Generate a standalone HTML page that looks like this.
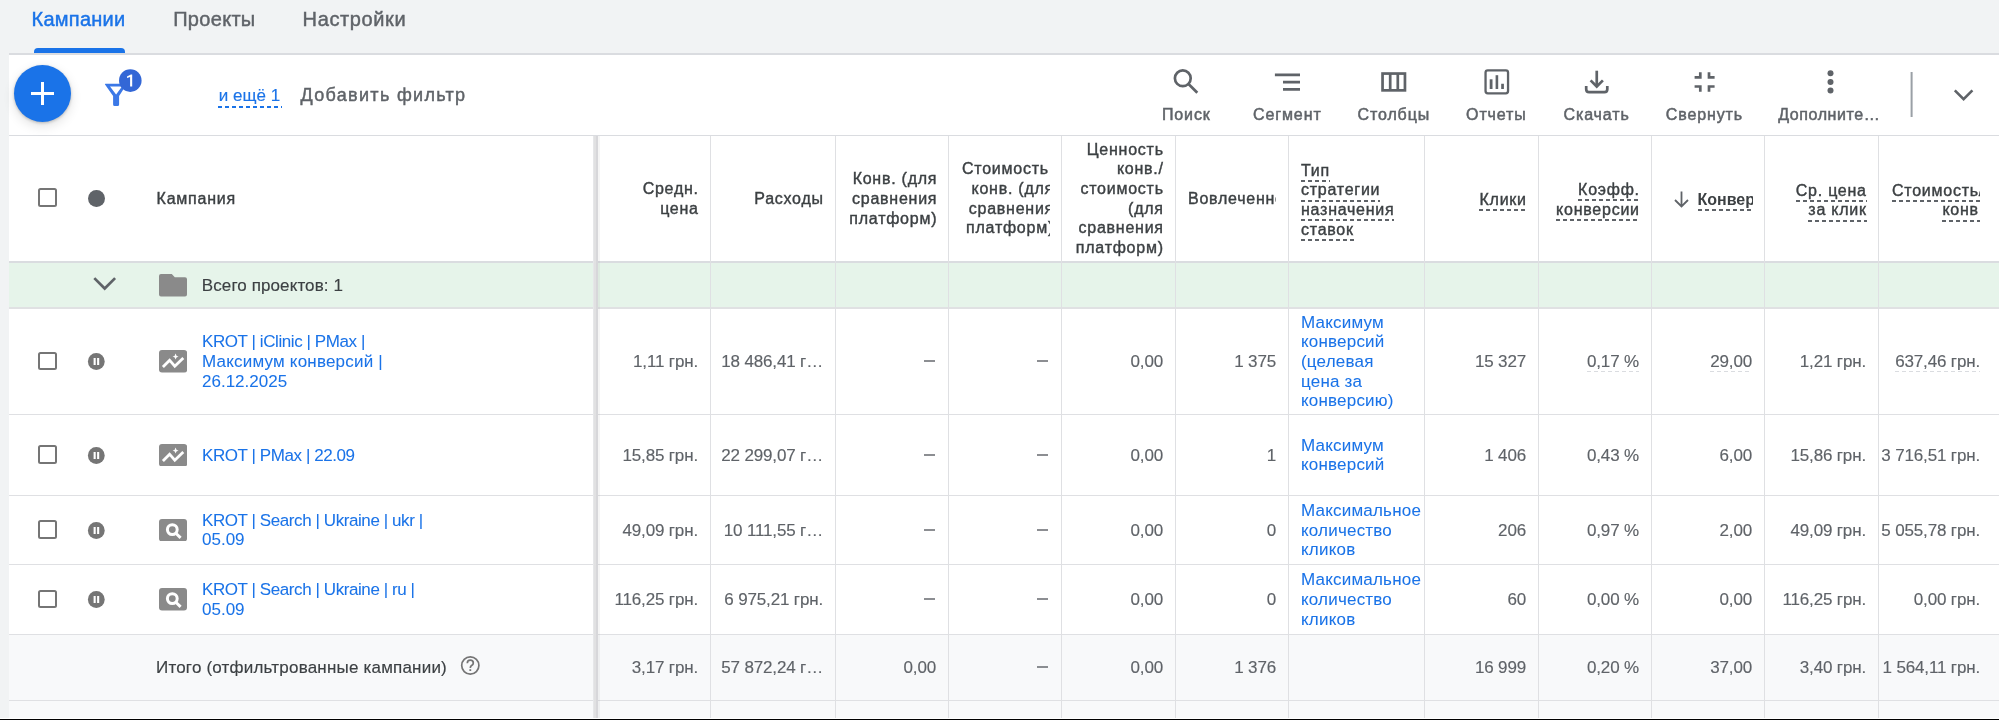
<!DOCTYPE html>
<html><head><meta charset="utf-8">
<style>
html,body{margin:0;padding:0;}
body{width:1999px;height:720px;overflow:hidden;position:relative;background:#f1f3f4;font-family:"Liberation Sans", sans-serif;}
.t{position:absolute;white-space:nowrap;}
#w{position:absolute;left:0;top:0;width:1999px;height:720px;will-change:transform;}
.r{position:absolute;}
.clip{position:absolute;overflow:hidden;}
.ful{padding-bottom:1px;background:repeating-linear-gradient(to right,#dadce0 0 4px,transparent 4px 7px) left bottom/100% 1px no-repeat;}
.ul{padding-bottom:3.3px;background:repeating-linear-gradient(to right,#5f6368 0 4px,transparent 4px 7px) left bottom/100% 2px no-repeat;}
</style></head><body><div id="w">
<div class="r" style="left:9px;top:55px;width:1990px;height:663px;background:#fff;"></div>
<div class="r" style="left:9px;top:53px;width:1990px;height:2px;background:#dadce0;"></div>
<div class="t" style="top:8.97px;font-size:20px;line-height:20px;color:#1a73e8;letter-spacing:0.25px;-webkit-text-stroke:0.45px #1a73e8;left:31.60px;">Кампании</div>
<div class="t" style="top:8.97px;font-size:20px;line-height:20px;color:#5f6368;letter-spacing:0.3px;-webkit-text-stroke:0.45px #5f6368;left:173.20px;">Проекты</div>
<div class="t" style="top:8.97px;font-size:20px;line-height:20px;color:#5f6368;letter-spacing:0.62px;-webkit-text-stroke:0.45px #5f6368;left:302.60px;">Настройки</div>
<div class="r" style="left:34px;top:47.5px;width:91px;height:5.5px;background:#1a73e8;border-radius:4px 4px 0 0;"></div>
<div class="r" style="left:9px;top:135px;width:1990px;height:1px;background:#dadce0;"></div>
<div class="r" style="left:14px;top:65px;width:57px;height:57px;border-radius:50%;background:#1a73e8;box-shadow:0 1px 3px rgba(0,0,0,.22),0 4px 12px rgba(0,0,0,.12);"></div>
<div class="r" style="left:31px;top:92.25px;width:23px;height:2.5px;background:#fff;"></div>
<div class="r" style="left:41.25px;top:82px;width:2.5px;height:23px;background:#fff;"></div>
<svg class="r" style="left:100px;top:66px" width="46" height="44" viewBox="0 0 46 44">
<path fill-rule="evenodd" fill="#3b78e7" d="M5.5 17.75 H27 L19.1 30 V38.5 Q19.1 40 17.6 40 H14.6 Q13.1 40 13.1 38.5 V30 L5 18.6 Q4.6 17.75 5.5 17.75Z M10 20.6 L16.1 28.4 L22 20.6Z"/>
<circle cx="30.3" cy="14.6" r="11.3" fill="#3367d6"/>
<path d="M27 10.4 L30.9 8.4 H32.2 V20.6 H30.1 V10.9 L27 12.1Z" fill="#fff"/>
</svg>
<div class="t" style="top:85.51px;font-size:17px;line-height:20px;color:#1a73e8;-webkit-text-stroke:0.15px #1a73e8;left:218.80px;">и ещё 1</div>
<div class="r" style="left:218px;top:105.5px;width:64px;height:2px;background:repeating-linear-gradient(to right,#1a73e8 0 4.5px,transparent 4.5px 7px);"></div>
<div class="t" style="top:85.16px;font-size:18px;line-height:20px;color:#5f6368;letter-spacing:1.32px;-webkit-text-stroke:0.45px #5f6368;left:300.50px;">Добавить фильтр</div>
<div class="t" style="top:105.16px;font-size:16px;line-height:20px;color:#5f6368;letter-spacing:0.9px;-webkit-text-stroke:0.5px #5f6368;left:1116.30px;width:140px;text-align:center;">Поиск</div>
<div class="t" style="top:105.16px;font-size:16px;line-height:20px;color:#5f6368;letter-spacing:0.9px;-webkit-text-stroke:0.5px #5f6368;left:1217.30px;width:140px;text-align:center;">Сегмент</div>
<div class="t" style="top:105.16px;font-size:16px;line-height:20px;color:#5f6368;letter-spacing:0.9px;-webkit-text-stroke:0.5px #5f6368;left:1323.80px;width:140px;text-align:center;">Столбцы</div>
<div class="t" style="top:105.16px;font-size:16px;line-height:20px;color:#5f6368;letter-spacing:0.9px;-webkit-text-stroke:0.5px #5f6368;left:1426.40px;width:140px;text-align:center;">Отчеты</div>
<div class="t" style="top:105.16px;font-size:16px;line-height:20px;color:#5f6368;letter-spacing:0.9px;-webkit-text-stroke:0.5px #5f6368;left:1526.60px;width:140px;text-align:center;">Скачать</div>
<div class="t" style="top:105.16px;font-size:16px;line-height:20px;color:#5f6368;letter-spacing:0.9px;-webkit-text-stroke:0.5px #5f6368;left:1634.40px;width:140px;text-align:center;">Свернуть</div>
<div class="t" style="top:105.16px;font-size:16px;line-height:20px;color:#5f6368;letter-spacing:0.6px;-webkit-text-stroke:0.5px #5f6368;left:1759.30px;width:140px;text-align:center;">Дополните…</div>
<svg class="r" style="left:0;top:0" width="1999" height="140" viewBox="0 0 1999 140">
<g fill="none" stroke="#5f6368" stroke-width="2.7">
<circle cx="1182.8" cy="78.3" r="7.9"/>
<path d="M1188.5 84 L1197.3 92.8"/>
<path d="M1274.9 74.9 H1300 M1283 82.2 H1300 M1283 89.4 H1300"/>
<rect x="1382.55" y="73.55" width="22.4" height="16.8"/>
<path d="M1390.2 73.5 V90.4 M1397.8 73.5 V90.4"/>
<rect x="1485.55" y="70.4" width="22.5" height="22.9" rx="2.2" stroke-width="2.3"/>
<path d="M1596.75 70.7 V86"/>
<path d="M1590.6 80.4 L1596.75 86.5 L1602.9 80.4"/>
<path d="M1586.2 86 V89.2 Q1586.2 92.1 1589.1 92.1 H1604.4 Q1607.3 92.1 1607.3 89.2 V86"/>
<path d="M1700.3 72.2 V77.4 H1694.6 M1709 72.2 V77.4 H1714.6 M1694.6 86.5 H1700.3 V91.7 M1714.6 86.5 H1709 V91.7"/>
<path d="M1954.8 90.3 L1963.6 99.1 L1972.4 90.3" stroke-width="2.6"/>
</g>
<g fill="#5f6368">
<rect x="1489.7" y="79.3" width="2.8" height="9.7"/>
<rect x="1495.6" y="75.2" width="2.6" height="13.8"/>
<rect x="1501.2" y="83.75" width="2.7" height="5.25"/>
<circle cx="1830.5" cy="73.3" r="3"/>
<circle cx="1830.5" cy="82" r="3"/>
<circle cx="1830.5" cy="90.6" r="3"/>
</g>
<rect x="1910.6" y="72" width="2" height="45" fill="#9aa0a6"/>
</svg>
<div class="r" style="left:9px;top:263px;width:1990px;height:44px;background:#e6f4ea;"></div>
<div class="r" style="left:9px;top:635px;width:1990px;height:83px;background:#f8f9fa;"></div>
<div class="r" style="left:9px;top:261px;width:1990px;height:2px;background:#dadce0;"></div>
<div class="r" style="left:9px;top:307px;width:1990px;height:2px;background:#e0e1e3;"></div>
<div class="r" style="left:9px;top:414px;width:1990px;height:1px;background:#dfe0e3;"></div>
<div class="r" style="left:9px;top:495px;width:1990px;height:1px;background:#dfe0e3;"></div>
<div class="r" style="left:9px;top:564px;width:1990px;height:1px;background:#dfe0e3;"></div>
<div class="r" style="left:9px;top:634px;width:1990px;height:1px;background:#dfe0e3;"></div>
<div class="r" style="left:9px;top:700px;width:1990px;height:1px;background:#dfe0e3;"></div>
<div class="r" style="left:710px;top:136px;width:1px;height:582px;background:#dfe0e3;"></div>
<div class="r" style="left:835px;top:136px;width:1px;height:582px;background:#dfe0e3;"></div>
<div class="r" style="left:948px;top:136px;width:1px;height:582px;background:#dfe0e3;"></div>
<div class="r" style="left:1061px;top:136px;width:1px;height:582px;background:#dfe0e3;"></div>
<div class="r" style="left:1175px;top:136px;width:1px;height:582px;background:#dfe0e3;"></div>
<div class="r" style="left:1288px;top:136px;width:1px;height:582px;background:#dfe0e3;"></div>
<div class="r" style="left:1424px;top:136px;width:1px;height:582px;background:#dfe0e3;"></div>
<div class="r" style="left:1538px;top:136px;width:1px;height:582px;background:#dfe0e3;"></div>
<div class="r" style="left:1651px;top:136px;width:1px;height:582px;background:#dfe0e3;"></div>
<div class="r" style="left:1764px;top:136px;width:1px;height:582px;background:#dfe0e3;"></div>
<div class="r" style="left:1878px;top:136px;width:1px;height:582px;background:#dfe0e3;"></div>
<div class="r" style="left:593px;top:136px;width:1px;height:582px;background:#e6e7e9;"></div>
<div class="r" style="left:594px;top:136px;width:2px;height:582px;background:#e1e1e2;"></div>
<div class="r" style="left:596px;top:136px;width:2px;height:582px;background:#d7d7da;"></div>
<div class="r" style="left:598px;top:136px;width:2px;height:582px;background:rgba(0,0,0,0.04);"></div>
<div class="r" style="left:0px;top:718px;width:1999px;height:1px;background:#fff;"></div>
<div class="r" style="left:0px;top:719px;width:1999px;height:1px;background:#000;"></div>
<div class="r" style="left:38.2px;top:188.3px;width:14.6px;height:14.6px;border:2.6px solid #757575;border-radius:2.5px;"></div>
<div class="r" style="left:87.8px;top:189.8px;width:16.8px;height:16.8px;border-radius:50%;background:#5f6368;"></div>
<div class="t" style="top:189.21px;font-size:16px;line-height:19.7px;color:#3c4043;letter-spacing:0.75px;-webkit-text-stroke:0.4px #3c4043;left:156.60px;">Кампания</div>
<div class="t" style="top:179.41px;font-size:16px;line-height:19.7px;color:#3c4043;letter-spacing:0.75px;-webkit-text-stroke:0.4px #3c4043;left:298.75px;width:400px;text-align:right;">Средн.</div>
<div class="t" style="top:199.11px;font-size:16px;line-height:19.7px;color:#3c4043;letter-spacing:0.75px;-webkit-text-stroke:0.4px #3c4043;left:298.75px;width:400px;text-align:right;">цена</div>
<div class="t" style="top:189.01px;font-size:16px;line-height:19.7px;color:#3c4043;letter-spacing:0.75px;-webkit-text-stroke:0.4px #3c4043;left:423.75px;width:400px;text-align:right;">Расходы</div>
<div class="t" style="top:169.31px;font-size:16px;line-height:19.7px;color:#3c4043;letter-spacing:0.75px;-webkit-text-stroke:0.4px #3c4043;left:537.25px;width:400px;text-align:right;">Конв. (для</div>
<div class="t" style="top:189.01px;font-size:16px;line-height:19.7px;color:#3c4043;letter-spacing:0.75px;-webkit-text-stroke:0.4px #3c4043;left:537.25px;width:400px;text-align:right;">сравнения</div>
<div class="t" style="top:208.71px;font-size:16px;line-height:19.7px;color:#3c4043;letter-spacing:0.75px;-webkit-text-stroke:0.4px #3c4043;left:537.25px;width:400px;text-align:right;">платформ)</div>
<div class="clip" style="left:949px;width:101px;top:159.21px;height:23.7px;"><div style="position:absolute;left:-295.00px;width:400px;text-align:right;top:0;font-size:16px;line-height:19.7px;color:#3c4043;letter-spacing:0.75px;white-space:nowrap;-webkit-text-stroke:0.4px #3c4043;">Стоимость,</div></div>
<div class="clip" style="left:949px;width:101px;top:178.91px;height:23.7px;"><div style="position:absolute;left:-295.00px;width:400px;text-align:right;top:0;font-size:16px;line-height:19.7px;color:#3c4043;letter-spacing:0.75px;white-space:nowrap;-webkit-text-stroke:0.4px #3c4043;">конв. (для</div></div>
<div class="clip" style="left:949px;width:101px;top:198.61px;height:23.7px;"><div style="position:absolute;left:-295.00px;width:400px;text-align:right;top:0;font-size:16px;line-height:19.7px;color:#3c4043;letter-spacing:0.75px;white-space:nowrap;-webkit-text-stroke:0.4px #3c4043;">сравнения</div></div>
<div class="clip" style="left:949px;width:101px;top:218.31px;height:23.7px;"><div style="position:absolute;left:-295.00px;width:400px;text-align:right;top:0;font-size:16px;line-height:19.7px;color:#3c4043;letter-spacing:0.75px;white-space:nowrap;-webkit-text-stroke:0.4px #3c4043;">платформ)</div></div>
<div class="t" style="top:139.61px;font-size:16px;line-height:19.7px;color:#3c4043;letter-spacing:0.75px;-webkit-text-stroke:0.4px #3c4043;left:763.75px;width:400px;text-align:right;">Ценность</div>
<div class="t" style="top:159.31px;font-size:16px;line-height:19.7px;color:#3c4043;letter-spacing:0.75px;-webkit-text-stroke:0.4px #3c4043;left:763.75px;width:400px;text-align:right;">конв./</div>
<div class="t" style="top:179.01px;font-size:16px;line-height:19.7px;color:#3c4043;letter-spacing:0.75px;-webkit-text-stroke:0.4px #3c4043;left:763.75px;width:400px;text-align:right;">стоимость</div>
<div class="t" style="top:198.71px;font-size:16px;line-height:19.7px;color:#3c4043;letter-spacing:0.75px;-webkit-text-stroke:0.4px #3c4043;left:763.75px;width:400px;text-align:right;">(для</div>
<div class="t" style="top:218.41px;font-size:16px;line-height:19.7px;color:#3c4043;letter-spacing:0.75px;-webkit-text-stroke:0.4px #3c4043;left:763.75px;width:400px;text-align:right;">сравнения</div>
<div class="t" style="top:238.11px;font-size:16px;line-height:19.7px;color:#3c4043;letter-spacing:0.75px;-webkit-text-stroke:0.4px #3c4043;left:763.75px;width:400px;text-align:right;">платформ)</div>
<div class="clip" style="left:1176px;width:100px;top:188.61px;height:23.7px;"><div style="position:absolute;left:12.00px;top:0;font-size:16px;line-height:19.7px;color:#3c4043;letter-spacing:0.75px;white-space:nowrap;-webkit-text-stroke:0.4px #3c4043;">Вовлеченность</div></div>
<div class="t" style="top:160.51px;font-size:16px;line-height:19.7px;color:#3c4043;letter-spacing:0.75px;-webkit-text-stroke:0.4px #3c4043;left:1301.00px;"><span class="ul">Тип</span></div>
<div class="t" style="top:180.21px;font-size:16px;line-height:19.7px;color:#3c4043;letter-spacing:0.75px;-webkit-text-stroke:0.4px #3c4043;left:1301.00px;"><span class="ul">стратегии</span></div>
<div class="t" style="top:199.91px;font-size:16px;line-height:19.7px;color:#3c4043;letter-spacing:0.75px;-webkit-text-stroke:0.4px #3c4043;left:1301.00px;"><span class="ul">назначения</span></div>
<div class="t" style="top:219.61px;font-size:16px;line-height:19.7px;color:#3c4043;letter-spacing:0.75px;-webkit-text-stroke:0.4px #3c4043;left:1301.00px;"><span class="ul">ставок</span></div>
<div class="t" style="top:190.11px;font-size:16px;line-height:19.7px;color:#3c4043;letter-spacing:0.75px;-webkit-text-stroke:0.4px #3c4043;left:1126.75px;width:400px;text-align:right;"><span class="ul">Клики</span></div>
<div class="t" style="top:179.91px;font-size:16px;line-height:19.7px;color:#3c4043;letter-spacing:0.75px;-webkit-text-stroke:0.4px #3c4043;left:1239.75px;width:400px;text-align:right;"><span class="ul">Коэфф.</span></div>
<div class="t" style="top:199.61px;font-size:16px;line-height:19.7px;color:#3c4043;letter-spacing:0.75px;-webkit-text-stroke:0.4px #3c4043;left:1239.75px;width:400px;text-align:right;"><span class="ul">конверсии</span></div>
<div class="clip" style="left:1652px;width:101px;top:189.71px;height:23.7px;"><div style="position:absolute;left:45.50px;top:0;font-size:16px;line-height:19.7px;color:#3c4043;letter-spacing:0px;white-space:nowrap;font-weight:700;"><span class="ul">Конверсии</span></div></div>
<svg class="r" style="left:1670px;top:188px" width="24" height="22" viewBox="0 0 24 22"><path d="M11.5 3.5 V18 M5 12 L11.5 18.5 L18 12" fill="none" stroke="#5f6368" stroke-width="1.8"/></svg>
<div class="t" style="top:180.51px;font-size:16px;line-height:19.7px;color:#3c4043;letter-spacing:0.75px;-webkit-text-stroke:0.4px #3c4043;left:1466.75px;width:400px;text-align:right;"><span class="ul">Ср. цена</span></div>
<div class="t" style="top:200.21px;font-size:16px;line-height:19.7px;color:#3c4043;letter-spacing:0.75px;-webkit-text-stroke:0.4px #3c4043;left:1466.75px;width:400px;text-align:right;"><span class="ul">за клик</span></div>
<div class="clip" style="left:1879px;width:101px;top:180.51px;height:23.7px;"><div style="position:absolute;left:-295.00px;width:400px;text-align:right;top:0;font-size:16px;line-height:19.7px;color:#3c4043;letter-spacing:0.75px;white-space:nowrap;-webkit-text-stroke:0.4px #3c4043;"><span class="ul">Стоимость/</span></div></div>
<div class="clip" style="left:1879px;width:101px;top:200.21px;height:23.7px;"><div style="position:absolute;left:-295.00px;width:400px;text-align:right;top:0;font-size:16px;line-height:19.7px;color:#3c4043;letter-spacing:0.75px;white-space:nowrap;-webkit-text-stroke:0.4px #3c4043;"><span class="ul">конв.</span></div></div>
<svg class="r" style="left:92px;top:275px" width="26" height="18" viewBox="0 0 26 18"><path d="M2.3 3.1 L12.7 13.5 L23.1 3.1" fill="none" stroke="#5f6368" stroke-width="2.7"/></svg>
<svg class="r" style="left:158.9px;top:274.1px" width="28" height="22.5" viewBox="0 0 28 22.5"><path d="M0 2 Q0 0 2 0 H12.8 L15.8 3.2 H26 Q28 3.2 28 5.2 V20.5 Q28 22.5 26 22.5 H2 Q0 22.5 0 20.5Z" fill="#8a8a8a"/></svg>
<div class="t" style="top:275.76px;font-size:17px;line-height:19.7px;color:#3c4043;-webkit-text-stroke:0.15px #3c4043;letter-spacing:0.1px;left:201.80px;">Всего проектов: 1</div>
<div class="r" style="left:38.3px;top:351.70px;width:14.6px;height:14.6px;border:2.6px solid #757575;border-radius:2.5px;"></div>
<svg class="r" style="left:87px;top:352.00px" width="19" height="19" viewBox="0 0 19 19"><circle cx="9.3" cy="9.5" r="8.4" fill="#757575"/><rect x="6.6" y="6" width="2.1" height="7" fill="#fff"/><rect x="10.1" y="6" width="2.1" height="7" fill="#fff"/></svg>
<svg class="r" style="left:158.8px;top:350.10px" width="28.2" height="22.6" viewBox="0 0 28.2 22.6"><rect width="28.2" height="22.6" rx="3" fill="#8a8a8a"/><path d="M3.9 17 L10.6 10.2 L15.8 16.2 L24.3 8.1" fill="none" stroke="#fff" stroke-width="2.8"/><path d="M16.6 3.6 Q16.9 6.3 19.6 6.6 Q16.9 6.9 16.6 9.6 Q16.3 6.9 13.6 6.6 Q16.3 6.3 16.6 3.6Z" fill="#fff"/></svg>
<div class="t" style="top:332.36px;font-size:17px;line-height:19.7px;color:#1a73e8;-webkit-text-stroke:0.05px #1a73e8;left:202.00px;"><span style="letter-spacing:-0.42px">KROT | iClinic | PMax |</span></div>
<div class="t" style="top:352.06px;font-size:17px;line-height:19.7px;color:#1a73e8;-webkit-text-stroke:0.05px #1a73e8;left:202.00px;"><span style="letter-spacing:0.2px">Максимум конверсий |</span></div>
<div class="t" style="top:371.76px;font-size:17px;line-height:19.7px;color:#1a73e8;-webkit-text-stroke:0.05px #1a73e8;left:202.00px;">26.12.2025</div>
<div class="t" style="top:352.06px;font-size:17px;line-height:19.7px;color:#5f6368;-webkit-text-stroke:0.15px #5f6368;letter-spacing:-0.15px;left:198.00px;width:500px;text-align:right;">1,11 грн.</div>
<div class="t" style="top:352.06px;font-size:17px;line-height:19.7px;color:#5f6368;-webkit-text-stroke:0.15px #5f6368;letter-spacing:-0.15px;left:323.00px;width:500px;text-align:right;">18 486,41 г…</div>
<div class="r" style="left:924px;top:360px;width:11px;height:2px;background:rgba(95,99,104,0.72);"></div>
<div class="r" style="left:1037px;top:360px;width:11px;height:2px;background:rgba(95,99,104,0.72);"></div>
<div class="t" style="top:352.06px;font-size:17px;line-height:19.7px;color:#5f6368;-webkit-text-stroke:0.15px #5f6368;letter-spacing:-0.15px;left:663.00px;width:500px;text-align:right;">0,00</div>
<div class="t" style="top:352.06px;font-size:17px;line-height:19.7px;color:#5f6368;-webkit-text-stroke:0.15px #5f6368;letter-spacing:-0.15px;left:776.00px;width:500px;text-align:right;">1 375</div>
<div class="t" style="top:312.66px;font-size:17px;line-height:19.7px;color:#1a73e8;-webkit-text-stroke:0.05px #1a73e8;letter-spacing:0.2px;left:1301.00px;">Максимум</div>
<div class="t" style="top:332.36px;font-size:17px;line-height:19.7px;color:#1a73e8;-webkit-text-stroke:0.05px #1a73e8;letter-spacing:0.2px;left:1301.00px;">конверсий</div>
<div class="t" style="top:352.06px;font-size:17px;line-height:19.7px;color:#1a73e8;-webkit-text-stroke:0.05px #1a73e8;letter-spacing:0.2px;left:1301.00px;">(целевая</div>
<div class="t" style="top:371.76px;font-size:17px;line-height:19.7px;color:#1a73e8;-webkit-text-stroke:0.05px #1a73e8;letter-spacing:0.2px;left:1301.00px;">цена за</div>
<div class="t" style="top:391.46px;font-size:17px;line-height:19.7px;color:#1a73e8;-webkit-text-stroke:0.05px #1a73e8;letter-spacing:0.2px;left:1301.00px;">конверсию)</div>
<div class="t" style="top:352.06px;font-size:17px;line-height:19.7px;color:#5f6368;-webkit-text-stroke:0.15px #5f6368;letter-spacing:-0.15px;left:1026.00px;width:500px;text-align:right;">15 327</div>
<div class="t" style="top:352.06px;font-size:17px;line-height:19.7px;color:#5f6368;-webkit-text-stroke:0.15px #5f6368;letter-spacing:-0.15px;left:1139.00px;width:500px;text-align:right;"><span class="ful">0,17 %</span></div>
<div class="t" style="top:352.06px;font-size:17px;line-height:19.7px;color:#5f6368;-webkit-text-stroke:0.15px #5f6368;letter-spacing:-0.15px;left:1252.00px;width:500px;text-align:right;"><span class="ful">29,00</span></div>
<div class="t" style="top:352.06px;font-size:17px;line-height:19.7px;color:#5f6368;-webkit-text-stroke:0.15px #5f6368;letter-spacing:-0.15px;left:1366.00px;width:500px;text-align:right;">1,21 грн.</div>
<div class="t" style="top:352.06px;font-size:17px;line-height:19.7px;color:#5f6368;-webkit-text-stroke:0.15px #5f6368;letter-spacing:-0.15px;left:1480.00px;width:500px;text-align:right;"><span class="ful">637,46 грн.</span></div>
<div class="r" style="left:38.3px;top:445.20px;width:14.6px;height:14.6px;border:2.6px solid #757575;border-radius:2.5px;"></div>
<svg class="r" style="left:87px;top:445.50px" width="19" height="19" viewBox="0 0 19 19"><circle cx="9.3" cy="9.5" r="8.4" fill="#757575"/><rect x="6.6" y="6" width="2.1" height="7" fill="#fff"/><rect x="10.1" y="6" width="2.1" height="7" fill="#fff"/></svg>
<svg class="r" style="left:158.8px;top:443.60px" width="28.2" height="22.6" viewBox="0 0 28.2 22.6"><rect width="28.2" height="22.6" rx="3" fill="#8a8a8a"/><path d="M3.9 17 L10.6 10.2 L15.8 16.2 L24.3 8.1" fill="none" stroke="#fff" stroke-width="2.8"/><path d="M16.6 3.6 Q16.9 6.3 19.6 6.6 Q16.9 6.9 16.6 9.6 Q16.3 6.9 13.6 6.6 Q16.3 6.3 16.6 3.6Z" fill="#fff"/></svg>
<div class="t" style="top:445.56px;font-size:17px;line-height:19.7px;color:#1a73e8;-webkit-text-stroke:0.05px #1a73e8;left:202.00px;"><span style="letter-spacing:-0.42px">KROT | PMax | 22.09</span></div>
<div class="t" style="top:445.56px;font-size:17px;line-height:19.7px;color:#5f6368;-webkit-text-stroke:0.15px #5f6368;letter-spacing:-0.15px;left:198.00px;width:500px;text-align:right;">15,85 грн.</div>
<div class="t" style="top:445.56px;font-size:17px;line-height:19.7px;color:#5f6368;-webkit-text-stroke:0.15px #5f6368;letter-spacing:-0.15px;left:323.00px;width:500px;text-align:right;">22 299,07 г…</div>
<div class="r" style="left:924px;top:454px;width:11px;height:2px;background:rgba(95,99,104,0.72);"></div>
<div class="r" style="left:1037px;top:454px;width:11px;height:2px;background:rgba(95,99,104,0.72);"></div>
<div class="t" style="top:445.56px;font-size:17px;line-height:19.7px;color:#5f6368;-webkit-text-stroke:0.15px #5f6368;letter-spacing:-0.15px;left:663.00px;width:500px;text-align:right;">0,00</div>
<div class="t" style="top:445.56px;font-size:17px;line-height:19.7px;color:#5f6368;-webkit-text-stroke:0.15px #5f6368;letter-spacing:-0.15px;left:776.00px;width:500px;text-align:right;">1</div>
<div class="t" style="top:435.71px;font-size:17px;line-height:19.7px;color:#1a73e8;-webkit-text-stroke:0.05px #1a73e8;letter-spacing:0.2px;left:1301.00px;">Максимум</div>
<div class="t" style="top:455.41px;font-size:17px;line-height:19.7px;color:#1a73e8;-webkit-text-stroke:0.05px #1a73e8;letter-spacing:0.2px;left:1301.00px;">конверсий</div>
<div class="t" style="top:445.56px;font-size:17px;line-height:19.7px;color:#5f6368;-webkit-text-stroke:0.15px #5f6368;letter-spacing:-0.15px;left:1026.00px;width:500px;text-align:right;">1 406</div>
<div class="t" style="top:445.56px;font-size:17px;line-height:19.7px;color:#5f6368;-webkit-text-stroke:0.15px #5f6368;letter-spacing:-0.15px;left:1139.00px;width:500px;text-align:right;">0,43 %</div>
<div class="t" style="top:445.56px;font-size:17px;line-height:19.7px;color:#5f6368;-webkit-text-stroke:0.15px #5f6368;letter-spacing:-0.15px;left:1252.00px;width:500px;text-align:right;">6,00</div>
<div class="t" style="top:445.56px;font-size:17px;line-height:19.7px;color:#5f6368;-webkit-text-stroke:0.15px #5f6368;letter-spacing:-0.15px;left:1366.00px;width:500px;text-align:right;">15,86 грн.</div>
<div class="t" style="top:445.56px;font-size:17px;line-height:19.7px;color:#5f6368;-webkit-text-stroke:0.15px #5f6368;letter-spacing:-0.15px;left:1480.00px;width:500px;text-align:right;">3 716,51 грн.</div>
<div class="r" style="left:38.3px;top:520.20px;width:14.6px;height:14.6px;border:2.6px solid #757575;border-radius:2.5px;"></div>
<svg class="r" style="left:87px;top:520.50px" width="19" height="19" viewBox="0 0 19 19"><circle cx="9.3" cy="9.5" r="8.4" fill="#757575"/><rect x="6.6" y="6" width="2.1" height="7" fill="#fff"/><rect x="10.1" y="6" width="2.1" height="7" fill="#fff"/></svg>
<svg class="r" style="left:158.9px;top:518.75px" width="28" height="22.5" viewBox="0 0 28 22.5"><rect width="28" height="22.5" rx="3" fill="#8a8a8a"/><circle cx="13.3" cy="10.6" r="4.9" fill="none" stroke="#fff" stroke-width="3"/><path d="M16.6 14 L21.6 18.9" stroke="#fff" stroke-width="3"/></svg>
<div class="t" style="top:510.71px;font-size:17px;line-height:19.7px;color:#1a73e8;-webkit-text-stroke:0.05px #1a73e8;left:202.00px;"><span style="letter-spacing:-0.42px">KROT | Search | Ukraine | ukr |</span></div>
<div class="t" style="top:530.41px;font-size:17px;line-height:19.7px;color:#1a73e8;-webkit-text-stroke:0.05px #1a73e8;left:202.00px;">05.09</div>
<div class="t" style="top:520.56px;font-size:17px;line-height:19.7px;color:#5f6368;-webkit-text-stroke:0.15px #5f6368;letter-spacing:-0.15px;left:198.00px;width:500px;text-align:right;">49,09 грн.</div>
<div class="t" style="top:520.56px;font-size:17px;line-height:19.7px;color:#5f6368;-webkit-text-stroke:0.15px #5f6368;letter-spacing:-0.15px;left:323.00px;width:500px;text-align:right;">10 111,55 г…</div>
<div class="r" style="left:924px;top:529px;width:11px;height:2px;background:rgba(95,99,104,0.72);"></div>
<div class="r" style="left:1037px;top:529px;width:11px;height:2px;background:rgba(95,99,104,0.72);"></div>
<div class="t" style="top:520.56px;font-size:17px;line-height:19.7px;color:#5f6368;-webkit-text-stroke:0.15px #5f6368;letter-spacing:-0.15px;left:663.00px;width:500px;text-align:right;">0,00</div>
<div class="t" style="top:520.56px;font-size:17px;line-height:19.7px;color:#5f6368;-webkit-text-stroke:0.15px #5f6368;letter-spacing:-0.15px;left:776.00px;width:500px;text-align:right;">0</div>
<div class="t" style="top:500.86px;font-size:17px;line-height:19.7px;color:#1a73e8;-webkit-text-stroke:0.05px #1a73e8;letter-spacing:0.2px;left:1301.00px;">Максимальное</div>
<div class="t" style="top:520.56px;font-size:17px;line-height:19.7px;color:#1a73e8;-webkit-text-stroke:0.05px #1a73e8;letter-spacing:0.2px;left:1301.00px;">количество</div>
<div class="t" style="top:540.26px;font-size:17px;line-height:19.7px;color:#1a73e8;-webkit-text-stroke:0.05px #1a73e8;letter-spacing:0.2px;left:1301.00px;">кликов</div>
<div class="t" style="top:520.56px;font-size:17px;line-height:19.7px;color:#5f6368;-webkit-text-stroke:0.15px #5f6368;letter-spacing:-0.15px;left:1026.00px;width:500px;text-align:right;">206</div>
<div class="t" style="top:520.56px;font-size:17px;line-height:19.7px;color:#5f6368;-webkit-text-stroke:0.15px #5f6368;letter-spacing:-0.15px;left:1139.00px;width:500px;text-align:right;">0,97 %</div>
<div class="t" style="top:520.56px;font-size:17px;line-height:19.7px;color:#5f6368;-webkit-text-stroke:0.15px #5f6368;letter-spacing:-0.15px;left:1252.00px;width:500px;text-align:right;">2,00</div>
<div class="t" style="top:520.56px;font-size:17px;line-height:19.7px;color:#5f6368;-webkit-text-stroke:0.15px #5f6368;letter-spacing:-0.15px;left:1366.00px;width:500px;text-align:right;">49,09 грн.</div>
<div class="t" style="top:520.56px;font-size:17px;line-height:19.7px;color:#5f6368;-webkit-text-stroke:0.15px #5f6368;letter-spacing:-0.15px;left:1480.00px;width:500px;text-align:right;">5 055,78 грн.</div>
<div class="r" style="left:38.3px;top:589.70px;width:14.6px;height:14.6px;border:2.6px solid #757575;border-radius:2.5px;"></div>
<svg class="r" style="left:87px;top:590.00px" width="19" height="19" viewBox="0 0 19 19"><circle cx="9.3" cy="9.5" r="8.4" fill="#757575"/><rect x="6.6" y="6" width="2.1" height="7" fill="#fff"/><rect x="10.1" y="6" width="2.1" height="7" fill="#fff"/></svg>
<svg class="r" style="left:158.9px;top:588.25px" width="28" height="22.5" viewBox="0 0 28 22.5"><rect width="28" height="22.5" rx="3" fill="#8a8a8a"/><circle cx="13.3" cy="10.6" r="4.9" fill="none" stroke="#fff" stroke-width="3"/><path d="M16.6 14 L21.6 18.9" stroke="#fff" stroke-width="3"/></svg>
<div class="t" style="top:580.21px;font-size:17px;line-height:19.7px;color:#1a73e8;-webkit-text-stroke:0.05px #1a73e8;left:202.00px;"><span style="letter-spacing:-0.42px">KROT | Search | Ukraine | ru |</span></div>
<div class="t" style="top:599.91px;font-size:17px;line-height:19.7px;color:#1a73e8;-webkit-text-stroke:0.05px #1a73e8;left:202.00px;">05.09</div>
<div class="t" style="top:590.06px;font-size:17px;line-height:19.7px;color:#5f6368;-webkit-text-stroke:0.15px #5f6368;letter-spacing:-0.15px;left:198.00px;width:500px;text-align:right;">116,25 грн.</div>
<div class="t" style="top:590.06px;font-size:17px;line-height:19.7px;color:#5f6368;-webkit-text-stroke:0.15px #5f6368;letter-spacing:-0.15px;left:323.00px;width:500px;text-align:right;">6 975,21 грн.</div>
<div class="r" style="left:924px;top:598px;width:11px;height:2px;background:rgba(95,99,104,0.72);"></div>
<div class="r" style="left:1037px;top:598px;width:11px;height:2px;background:rgba(95,99,104,0.72);"></div>
<div class="t" style="top:590.06px;font-size:17px;line-height:19.7px;color:#5f6368;-webkit-text-stroke:0.15px #5f6368;letter-spacing:-0.15px;left:663.00px;width:500px;text-align:right;">0,00</div>
<div class="t" style="top:590.06px;font-size:17px;line-height:19.7px;color:#5f6368;-webkit-text-stroke:0.15px #5f6368;letter-spacing:-0.15px;left:776.00px;width:500px;text-align:right;">0</div>
<div class="t" style="top:570.36px;font-size:17px;line-height:19.7px;color:#1a73e8;-webkit-text-stroke:0.05px #1a73e8;letter-spacing:0.2px;left:1301.00px;">Максимальное</div>
<div class="t" style="top:590.06px;font-size:17px;line-height:19.7px;color:#1a73e8;-webkit-text-stroke:0.05px #1a73e8;letter-spacing:0.2px;left:1301.00px;">количество</div>
<div class="t" style="top:609.76px;font-size:17px;line-height:19.7px;color:#1a73e8;-webkit-text-stroke:0.05px #1a73e8;letter-spacing:0.2px;left:1301.00px;">кликов</div>
<div class="t" style="top:590.06px;font-size:17px;line-height:19.7px;color:#5f6368;-webkit-text-stroke:0.15px #5f6368;letter-spacing:-0.15px;left:1026.00px;width:500px;text-align:right;">60</div>
<div class="t" style="top:590.06px;font-size:17px;line-height:19.7px;color:#5f6368;-webkit-text-stroke:0.15px #5f6368;letter-spacing:-0.15px;left:1139.00px;width:500px;text-align:right;">0,00 %</div>
<div class="t" style="top:590.06px;font-size:17px;line-height:19.7px;color:#5f6368;-webkit-text-stroke:0.15px #5f6368;letter-spacing:-0.15px;left:1252.00px;width:500px;text-align:right;">0,00</div>
<div class="t" style="top:590.06px;font-size:17px;line-height:19.7px;color:#5f6368;-webkit-text-stroke:0.15px #5f6368;letter-spacing:-0.15px;left:1366.00px;width:500px;text-align:right;">116,25 грн.</div>
<div class="t" style="top:590.06px;font-size:17px;line-height:19.7px;color:#5f6368;-webkit-text-stroke:0.15px #5f6368;letter-spacing:-0.15px;left:1480.00px;width:500px;text-align:right;">0,00 грн.</div>
<div class="t" style="top:657.56px;font-size:17px;line-height:19.7px;color:#3c4043;-webkit-text-stroke:0.15px #3c4043;letter-spacing:0.2px;left:156.00px;">Итого (отфильтрованные кампании)</div>
<svg class="r" style="left:460px;top:654.5px" width="21" height="21" viewBox="0 0 21 21"><circle cx="10.3" cy="10.5" r="8.6" fill="none" stroke="#757575" stroke-width="1.7"/><path d="M7.3 8.3 Q7.3 5.2 10.3 5.2 Q13.3 5.2 13.3 7.9 Q13.3 9.5 11.6 10.5 Q10.3 11.3 10.3 13" fill="none" stroke="#757575" stroke-width="1.7"/><rect x="9.4" y="14.2" width="1.8" height="1.8" fill="#757575"/></svg>
<div class="t" style="top:657.56px;font-size:17px;line-height:19.7px;color:#5f6368;-webkit-text-stroke:0.15px #5f6368;letter-spacing:-0.15px;left:198.00px;width:500px;text-align:right;">3,17 грн.</div>
<div class="t" style="top:657.56px;font-size:17px;line-height:19.7px;color:#5f6368;-webkit-text-stroke:0.15px #5f6368;letter-spacing:-0.15px;left:323.00px;width:500px;text-align:right;">57 872,24 г…</div>
<div class="t" style="top:657.56px;font-size:17px;line-height:19.7px;color:#5f6368;-webkit-text-stroke:0.15px #5f6368;letter-spacing:-0.15px;left:436.00px;width:500px;text-align:right;">0,00</div>
<div class="r" style="left:1037px;top:666px;width:11px;height:2px;background:rgba(95,99,104,0.72);"></div>
<div class="t" style="top:657.56px;font-size:17px;line-height:19.7px;color:#5f6368;-webkit-text-stroke:0.15px #5f6368;letter-spacing:-0.15px;left:663.00px;width:500px;text-align:right;">0,00</div>
<div class="t" style="top:657.56px;font-size:17px;line-height:19.7px;color:#5f6368;-webkit-text-stroke:0.15px #5f6368;letter-spacing:-0.15px;left:776.00px;width:500px;text-align:right;">1 376</div>
<div class="t" style="top:657.56px;font-size:17px;line-height:19.7px;color:#5f6368;-webkit-text-stroke:0.15px #5f6368;letter-spacing:-0.15px;left:1026.00px;width:500px;text-align:right;">16 999</div>
<div class="t" style="top:657.56px;font-size:17px;line-height:19.7px;color:#5f6368;-webkit-text-stroke:0.15px #5f6368;letter-spacing:-0.15px;left:1139.00px;width:500px;text-align:right;">0,20 %</div>
<div class="t" style="top:657.56px;font-size:17px;line-height:19.7px;color:#5f6368;-webkit-text-stroke:0.15px #5f6368;letter-spacing:-0.15px;left:1252.00px;width:500px;text-align:right;">37,00</div>
<div class="t" style="top:657.56px;font-size:17px;line-height:19.7px;color:#5f6368;-webkit-text-stroke:0.15px #5f6368;letter-spacing:-0.15px;left:1366.00px;width:500px;text-align:right;">3,40 грн.</div>
<div class="t" style="top:657.56px;font-size:17px;line-height:19.7px;color:#5f6368;-webkit-text-stroke:0.15px #5f6368;letter-spacing:-0.15px;left:1480.00px;width:500px;text-align:right;">1 564,11 грн.</div>

</div></body></html>
